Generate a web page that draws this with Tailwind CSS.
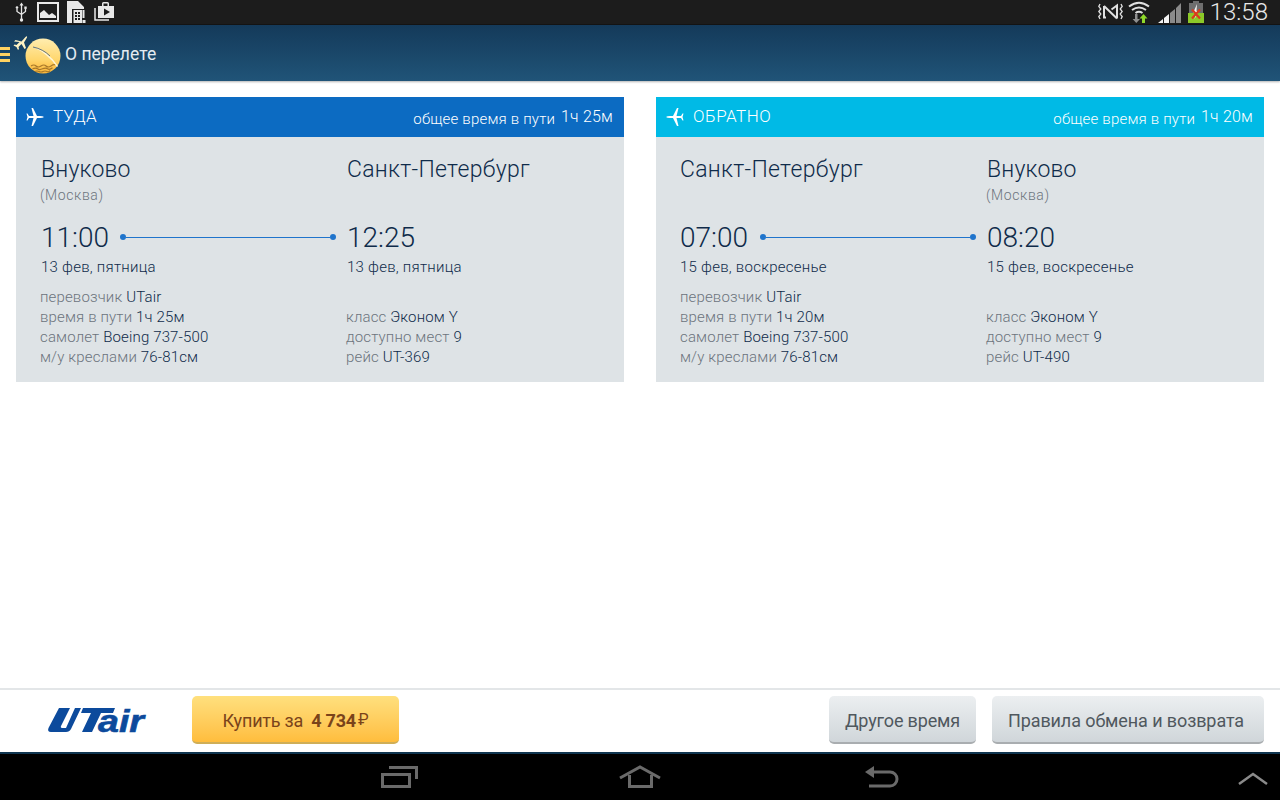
<!DOCTYPE html>
<html lang="ru"><head><meta charset="utf-8">
<script src="https://cdn.jsdelivr.net/npm/@tailwindcss/browser@4"></script>
</head>
<body class="w-[1280px] h-[800px] overflow-hidden bg-white font-['Roboto',sans-serif] flex flex-col">
<!-- status bar -->
<div class="h-[25px] bg-[#1c1c1c] flex items-center justify-between shrink-0 border-b border-[#141414]">
  <div class="flex items-center pl-[14px] gap-[8px]">
    <svg width="15" height="20" viewBox="0 0 15 20" fill="none" stroke="#e8e8e8" stroke-width="1.300"><path d="M7.500 2v15M3 6.500v3l4.500 3 4-3V6.500"/><path d="M7.500 0.500l2 3h-4z" fill="#e8e8e8" stroke="none"/><circle cx="3" cy="5.500" r="1.300" fill="#e8e8e8" stroke="none"/><rect x="10.300" y="4.500" width="2.400" height="2.400" fill="#e8e8e8" stroke="none"/><circle cx="7.500" cy="18" r="1.700" fill="#e8e8e8" stroke="none"/></svg>
    <svg width="22" height="20" viewBox="0 0 22 20"><path fill-rule="evenodd" fill="#e8e8e8" d="M0 0h22v20H0zM2 2v16h18V2z"/><path fill="#e8e8e8" d="M3 16v-5l4-3 3 3 2 2 3-2 4 3v2z"/></svg>
    <svg width="19" height="23" viewBox="0 0 19 23"><path fill="#e8e8e8" d="M0 0h11l6 6v2H5v14H0z"/><path fill="#e8e8e8" d="M6.500 9h8.500v13H6.500z"/><path fill="#1c1c1c" d="M8 11h2v2H8zM11 11h2v2h-2zM8 14h2v2H8zM11 14h2v2h-2zM8 17h2v2H8zM11 17h2v2h-2z"/><path fill="#e8e8e8" d="M15.500 19h3v3h-3zM15.500 9h2v8h-2z"/></svg>
    <svg width="21" height="20" viewBox="0 0 21 20"><path d="M1 6v12h14" fill="none" stroke="#e8e8e8" stroke-width="1.500"/><path fill="#e8e8e8" d="M4 4h4V1.500Q8 0 9.500 0h4Q15 0 15 1.500V4h5v12H4zM9.500 4h4V1.500h-4z"/><path fill="#1c1c1c" d="M10 6.500l6 3.500-6 3.500z"/></svg>
  </div>
  <div class="flex items-center pr-[12px]">
    <svg width="25" height="18" viewBox="0 0 25 18" class="mr-[5px]" fill="none" stroke="#e0e0e0" stroke-width="1.300"><path d="M2 1l-1.200 2.500 2 2.500-2 2.500 2 2.500-2 2.500 1.200 2.500M23 1l1.200 2.500-2 2.500 2 2.500-2 2.500 2 2.500-1.200 2.500"/><path stroke-width="2" d="M6 3v11.500h2M6 3l13 12.500M19 15.500V2.500l-5.500 4"/></svg>
    <svg width="22" height="22" viewBox="0 0 22 22" fill="none" stroke="#e0e0e0" stroke-width="2" class="mr-[8px]"><path d="M1 5.500q10-7.500 20 0M4 9q7-5 14 0M7.500 12q3.500-2.500 7 0"/><path fill="#8f8f8f" stroke="none" d="M7 13h2.500v5H12l-3.700 4-3.700-4H7z"/><path fill="#8fd92b" stroke="none" d="M15.500 13l4 4.500h-2.500V22h-3v-4.500h-2.500z"/></svg>
    <svg width="24" height="21" viewBox="0 0 24 21" class="mr-[6px]"><path fill="#f4f4f4" d="M0 21l5-4v4zM6 16l5-4v9H6z"/><path fill="#8a8a8a" d="M12 11l5-4v14h-5zM18 6l5-5v20h-5z"/></svg>
    <svg width="16" height="22" viewBox="0 0 16 22" class="mr-[6px]"><path fill="#6e6e6e" d="M5 0h6v2h4v10H1V2h4z"/><path fill="#8cc928" d="M0 12h16v10H0z"/><path fill="#f2f2f2" d="M9 3L5 12h2.500l-1 6 4.500-8H8.500z"/><path d="M4 8.500l8 9M12 8.500l-8 9" stroke="#d93a1c" stroke-width="2.200"/></svg>
    <span class="text-[24px] leading-[25px] font-light text-[#e8e8e8]">13:58</span>
  </div>
</div>
<!-- action bar -->
<div class="h-[56px] shrink-0 bg-gradient-to-b from-[#143a5a] to-[#205478] flex items-center relative shadow-[0_1px_2px_rgba(0,0,0,0.3)] z-10">
  <div class="w-[10px] flex flex-col gap-[3px] mt-[3px]">
    <div class="h-[3px] bg-[#ffd261]"></div><div class="h-[3px] bg-[#ffd261]"></div><div class="h-[3px] bg-[#ffd261]"></div>
  </div>
  <svg width="50" height="42" viewBox="0 0 50 42" class="ml-[3px] mt-[3px]">
    <defs>
      <linearGradient id="sun" x1="0" y1="0" x2="0" y2="1"><stop offset="0" stop-color="#ffedb0"/><stop offset="0.6" stop-color="#ffd76e"/><stop offset="1" stop-color="#fbb536"/></linearGradient>
    </defs>
    <circle cx="30" cy="22" r="17.500" fill="url(#sun)"/>
    <path d="M20 13q14 3 25 19l-1 1Q34 19 20 13z" fill="#fff6d8"/>
    <path d="M20 13q10 2 17 9" stroke="#4f677c" stroke-width="0.900" fill="none"/>
    <path d="M18 32q3-2 5 0t5 0 5 0 5 0 4-1M19.500 34.800q3-1.500 5 0t5 0 5 0 5-1M22 37.500q2-1 4 0t4 0 4 0 3-1" stroke="#a8782a" stroke-width="1.200" fill="none"/>
    <path fill="#fff3c4" d="M1 7.500l1.500-1.500 6 1.500 4-4.500q2-1.500 1.500.5l-3 5 2 5.500-1.500 1-3-5-3 3 .5 2-1 1-1.500-3-3-1.500 1-1 2 .5 3-3z"/>
  </svg>
  <span class="text-[17.500px] text-[#e4ebf1] ml-[2px] mt-[3px]">О перелете</span>
</div>
<!-- content -->
<main class="flex-1 px-[16px] pt-[16px] grid grid-cols-2 gap-x-[32px] content-start">
  <!-- Card 1 -->
  <section class="h-[285px] bg-[#dee3e6]">
    <header class="h-[40px] bg-[#0c6bc2] flex items-center justify-between pl-[10px] pr-[11px] text-white">
      <div class="flex items-center gap-[9px]">
        <svg width="18" height="18" viewBox="0 0 18 18"><path fill="#fff" d="M18 9Q17 8 14 8H11L7 0H5.500L7.500 8H3L1.500 5.500H.5L1.500 9 .5 12.500H1.500L3 10H7.500L5.500 18H7L11 10H14Q17 10 18 9Z"/></svg>
        <span class="text-[17px] font-light tracking-[0.1px]">ТУДА</span>
      </div>
      <div class="text-[15px] font-light mt-[3px] tracking-[0.2px]">общее время в пути <span class="text-[16px] ml-[2px] relative top-[-2px]">1ч 25м</span></div>
    </header>
    <div class="grid grid-cols-[306px_1fr] pl-[24px] text-[#0f2b4a]">
      <div class="relative">
        <div class="text-[23px] leading-[28px] font-light mt-[19px] tracking-[0.2px] pl-[1px]">Внуково</div>
        <div class="text-[14px] leading-[16px] font-light text-[#6c747d] mt-[3px] tracking-[0.6px]">(Москва)</div>
        <div class="flex items-center mt-[18px] h-[32px]">
          <span class="text-[28px] leading-[32px] font-light pl-[1px] relative top-[1px]">11:00</span>
          <div class="absolute left-[80px] right-[10px] flex items-center"><span class="w-[6px] h-[6px] rounded-full bg-[#1f74cc]"></span><span class="flex-1 h-px bg-[#1f74cc]"></span><span class="w-[6px] h-[6px] rounded-full bg-[#1f74cc]"></span></div>
        </div>
        <div class="text-[15px] leading-[20px] mt-[4px] font-light tracking-[0.25px] pl-[1px]">13 фев, пятница</div>
        <div class="mt-[10px] text-[15px] leading-[20px] font-light tracking-[0.15px]">
          <div><span class="text-[#6c747d]">перевозчик</span> UTair</div>
          <div><span class="text-[#6c747d]">время в пути</span> 1ч 25м</div>
          <div><span class="text-[#6c747d]">самолет</span> Boeing 737-500</div>
          <div><span class="text-[#6c747d]">м/у креслами</span> 76-81см</div>
        </div>
      </div>
      <div>
        <div class="text-[23px] leading-[28px] font-light mt-[19px] tracking-[0.3px] pl-[1px]">Санкт-Петербург</div>
        <div class="h-[16px] mt-[3px]"></div>
        <div class="mt-[18px] h-[32px] text-[28px] leading-[32px] font-light pl-[1px] relative top-[1px]">12:25</div>
        <div class="text-[15px] leading-[20px] mt-[4px] font-light tracking-[0.25px] pl-[1px]">13 фев, пятница</div>
        <div class="mt-[30px] text-[15px] leading-[20px] font-light tracking-[0.15px]">
          <div><span class="text-[#6c747d]">класс</span> Эконом Y</div>
          <div><span class="text-[#6c747d]">доступно мест</span> 9</div>
          <div><span class="text-[#6c747d]">рейс</span> UT-369</div>
        </div>
      </div>
    </div>
  </section>
  <!-- Card 2 -->
  <section class="h-[285px] bg-[#dee3e6]">
    <header class="h-[40px] bg-[#00bae6] flex items-center justify-between pl-[10px] pr-[11px] text-white">
      <div class="flex items-center gap-[9px]">
        <svg width="18" height="18" viewBox="0 0 18 18"><path fill="#fff" d="M0 9Q1 8 4 8H7L11 0H12.500L10.500 8H15L16.500 5.500H17.500L16.500 9 17.500 12.500H16.500L15 10H10.500L12.500 18H11L7 10H4Q1 10 0 9Z"/></svg>
        <span class="text-[17px] font-light tracking-[0.5px]">ОБРАТНО</span>
      </div>
      <div class="text-[15px] font-light mt-[3px] tracking-[0.2px]">общее время в пути <span class="text-[16px] ml-[2px] relative top-[-2px]">1ч 20м</span></div>
    </header>
    <div class="grid grid-cols-[306px_1fr] pl-[24px] text-[#0f2b4a]">
      <div class="relative">
        <div class="text-[23px] leading-[28px] font-light mt-[19px] tracking-[0.3px]">Санкт-Петербург</div>
        <div class="h-[16px] mt-[3px]"></div>
        <div class="flex items-center mt-[18px] h-[32px]">
          <span class="text-[28px] leading-[32px] font-light relative top-[1px]">07:00</span>
          <div class="absolute left-[80px] right-[10px] flex items-center"><span class="w-[6px] h-[6px] rounded-full bg-[#1f74cc]"></span><span class="flex-1 h-px bg-[#1f74cc]"></span><span class="w-[6px] h-[6px] rounded-full bg-[#1f74cc]"></span></div>
        </div>
        <div class="text-[15px] leading-[20px] mt-[4px] font-light tracking-[0.25px]">15 фев, воскресенье</div>
        <div class="mt-[10px] text-[15px] leading-[20px] font-light tracking-[0.15px]">
          <div><span class="text-[#6c747d]">перевозчик</span> UTair</div>
          <div><span class="text-[#6c747d]">время в пути</span> 1ч 20м</div>
          <div><span class="text-[#6c747d]">самолет</span> Boeing 737-500</div>
          <div><span class="text-[#6c747d]">м/у креслами</span> 76-81см</div>
        </div>
      </div>
      <div>
        <div class="text-[23px] leading-[28px] font-light mt-[19px] tracking-[0.2px] pl-[1px]">Внуково</div>
        <div class="text-[14px] leading-[16px] font-light text-[#6c747d] mt-[3px] tracking-[0.6px]">(Москва)</div>
        <div class="mt-[18px] h-[32px] text-[28px] leading-[32px] font-light pl-[1px] relative top-[1px]">08:20</div>
        <div class="text-[15px] leading-[20px] mt-[4px] font-light tracking-[0.25px] pl-[1px]">15 фев, воскресенье</div>
        <div class="mt-[30px] text-[15px] leading-[20px] font-light tracking-[0.15px]">
          <div><span class="text-[#6c747d]">класс</span> Эконом Y</div>
          <div><span class="text-[#6c747d]">доступно мест</span> 9</div>
          <div><span class="text-[#6c747d]">рейс</span> UT-490</div>
        </div>
      </div>
    </div>
  </section>
</main>
<!-- bottom actions -->
<div class="h-[66px] shrink-0 border-t-2 border-[#e3e6e8] border-b-2 border-b-[#0f3550] box-border flex items-start pt-[6px] pl-[48px] pr-[16px] bg-white">
  <div class="w-[144px] flex items-center shrink-0 mt-[12px]">
    <svg width="104" height="28" viewBox="0 0 104 28" class="overflow-visible"><path fill="#0c4a9c" d="M11 0H22L13 18Q12 20 15 20H18L27 0H33L23 21Q21.500 24 18 24H3Q-1 24 .5 20Z"/><path fill="#0c4a9c" d="M35 0H67L65 5H53L44 24H34L43 5H33Z"/><text x="50" y="24" font-family="Liberation Sans, sans-serif" font-weight="700" font-style="italic" font-size="31" fill="#0c4a9c" stroke="#0c4a9c" stroke-width="0.600" textLength="46" lengthAdjust="spacingAndGlyphs">air</text></svg>
  </div>
  <button class="w-[207px] h-[48px] pt-[2px] rounded-[5px] bg-gradient-to-b from-[#ffe07d] to-[#ffbd3c] border-b-2 border-[#cfae57] text-[18px] tracking-[-0.2px] text-[#7a431a] flex items-center justify-center">Купить за<b class="font-bold ml-[8px]">4 734</b><span class="ml-[2px] text-[16px]">₽</span></button>
  <div class="flex-1"></div>
  <button class="w-[147px] h-[48px] pt-[2px] rounded-[5px] bg-gradient-to-b from-[#eceff1] to-[#d0d6da] border-b-2 border-[#a9adb0] text-[18px] tracking-[-0.15px] text-[#50585e]">Другое время</button>
  <button class="w-[272px] h-[48px] pt-[2px] pr-[4px] ml-[16px] rounded-[5px] bg-gradient-to-b from-[#eceff1] to-[#d0d6da] border-b-2 border-[#a9adb0] text-[18px] tracking-[-0.1px] text-[#50585e]">Правила обмена и возврата</button>
</div>
<!-- nav bar -->
<nav class="h-[46px] shrink-0 bg-black relative">
  <svg width="37" height="24" viewBox="0 0 37 24" class="absolute left-[381px] top-[11px]" fill="none" stroke="#6a6a6a" stroke-width="3"><path d="M1.500 9.500h27v12h-27z"/><path d="M8 2.500h27.500V14"/></svg>
  <svg width="42" height="26" viewBox="0 0 42 26" class="absolute left-[619px] top-[9px]" fill="none" stroke="#6a6a6a" stroke-width="3"><path d="M1 15L21 4l20 11"/><path d="M10.500 12v11.500h22V12"/></svg>
  <svg width="34" height="24" viewBox="0 0 34 24" class="absolute left-[865px] top-[11px]" fill="none" stroke="#6a6a6a" stroke-width="3"><path d="M5 7h20a7 7 0 0 1 0 14H4"/><path fill="#6a6a6a" stroke="none" d="M0 7l9-6v12z"/></svg>
  <svg width="30" height="16" viewBox="0 0 30 16" class="absolute left-[1238px] top-[16px]" fill="none" stroke="#8a8a8a" stroke-width="2.500"><path d="M1 14L15 4l14 10"/></svg>
</nav>
</body></html>
